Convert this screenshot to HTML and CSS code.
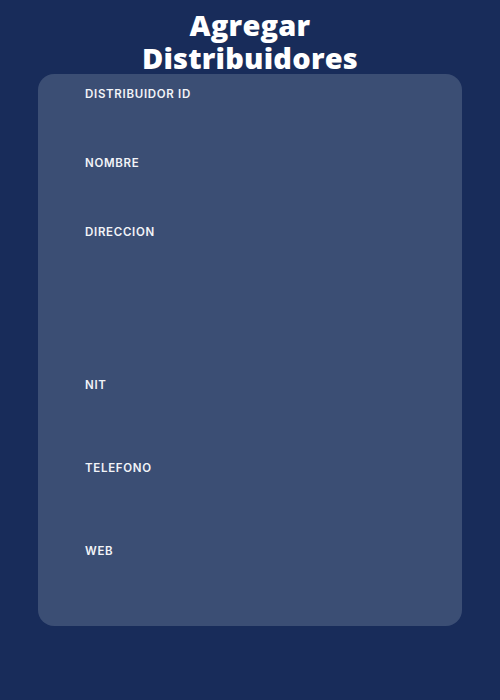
FILE: index.html
```html
<!DOCTYPE html>
<html lang="es">
<head>
<meta charset="utf-8">
<title>Agregar Distribuidores</title>
<link rel="stylesheet" href="styles.css">
</head>
<body>
<main class="page">
  <h1 class="title">Agregar<br>Distribuidores</h1>
  <form class="card">
    <div class="field"><label class="label">DISTRIBUIDOR ID</label></div>
    <div class="field"><label class="label">NOMBRE</label></div>
    <div class="field tall"><label class="label">DIRECCION</label></div>
    <div class="field mid"><label class="label">NIT</label></div>
    <div class="field mid"><label class="label">TELEFONO</label></div>
    <div class="field last"><label class="label">WEB</label></div>
  </form>
</main>
</body>
</html>
```

FILE: styles.css
```css
html, body {
  margin: 0;
  padding: 0;
  background: #182c5a;
}
.page {
  width: 500px;
  height: 700px;
  display: flex;
  flex-direction: column;
  align-items: center;
}
.title {
  margin: 0;
  padding-top: 8px;
  font-family: "Open Sans", "Lato", sans-serif;
  font-weight: 800;
  font-size: 29px;
  line-height: 33px;
  color: #ffffff;
  text-align: center;
  letter-spacing: 0.2px;
}
.card {
  width: 424px;
  box-sizing: border-box;
  background: #3b4e74;
  border-radius: 16px;
  padding: 13px 47px 68px;
  display: flex;
  flex-direction: column;
}
.field {
  height: 69px;
}
.field.tall {
  height: 153px;
}
.field.mid {
  height: 83px;
}
.field.last {
  height: 14px;
}
.label {
  display: block;
  font-family: "Inter", "Liberation Sans", sans-serif;
  font-weight: 600;
  font-size: 11.5px;
  line-height: 14px;
  color: #f2f4f8;
  letter-spacing: 0.7px;
}
```
